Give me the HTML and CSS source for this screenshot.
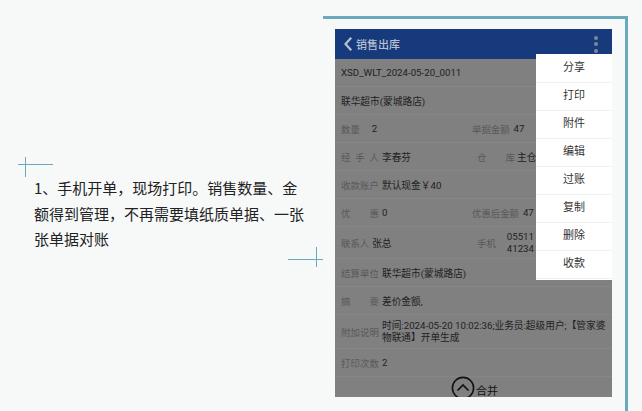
FILE: index.html
```html
<!DOCTYPE html>
<html lang="zh-CN">
<head>
<meta charset="utf-8">
<title>销售出库</title>
<link rel="stylesheet" href="styles.css">
</head>
<body>
<div class="page">
  <section class="intro">
    <span class="cross cross-a"></span>
    <span class="cross cross-b"></span>
    <p class="intro-text">1、手机开单，现场打印。销售数量、金额得到管理，不再需要填纸质单据、一张张单据对账</p>
  </section>
  <section class="frame">
    <div class="phone">
      <header class="bar">
        <svg class="back" width="10" height="14" viewBox="0 0 10 14"><path d="M7.5 1.5 L2.5 7 L7.5 12.5" fill="none" stroke="#b7bfd0" stroke-width="2.2" stroke-linecap="square"/></svg>
        <span class="bar-title">销售出库</span>
        <span class="dots"><i></i><i></i><i></i></span>
      </header>
      <div class="row"><span class="val">XSD_WLT_2024-05-20_0011</span></div>
      <div class="row"><span class="val">联华超市(蒙城路店)</span></div>
      <div class="row grid">
        <div class="cell"><span class="lab nat">数量</span><span class="val g12">2</span></div>
        <div class="cell"><span class="lab nat">单据金额</span><span class="val g4">47</span></div>
      </div>
      <div class="row grid">
        <div class="cell"><span class="lab j">经手人</span><span class="val">李春芬</span></div>
        <div class="cell p5"><span class="lab j38">仓库</span><span class="val g2">主仓</span></div>
      </div>
      <div class="row"><span class="lab j">收款账户</span><span class="val">默认现金￥40</span></div>
      <div class="row grid">
        <div class="cell"><span class="lab j">优惠</span><span class="val">0</span></div>
        <div class="cell"><span class="lab nat">优惠后金额</span><span class="val g4">47</span></div>
      </div>
      <div class="row grid tall">
        <div class="cell"><span class="lab nat">联系人</span><span class="val g3">张总</span></div>
        <div class="cell p5"><span class="lab nat">手机</span><span class="val g11 two">05511<br>41234</span></div>
      </div>
      <div class="row"><span class="lab j">结算单位</span><span class="val">联华超市(蒙城路店)</span></div>
      <div class="row"><span class="lab j">摘要</span><span class="val">差价金额,</span></div>
      <div class="row note"><span class="lab j">附加说明</span><span class="val two">时间:2024-05-20 10:02:36;业务员:超级用户;【管家婆<br>物联通】开单生成</span></div>
      <div class="row"><span class="lab j">打印次数</span><span class="val">2</span></div>
      <div class="merge">
        <svg class="merge-icon" width="24" height="24" viewBox="0 0 24 24"><circle cx="12" cy="12" r="10.6" fill="none" stroke="#111" stroke-width="1.6"/><path d="M6.5 14.5 L12 9 L17.5 14.5" fill="none" stroke="#111" stroke-width="1.7"/></svg>
        <span class="merge-text">合并</span>
      </div>
      <ul class="menu">
        <li>分享</li>
        <li>打印</li>
        <li>附件</li>
        <li>编辑</li>
        <li>过账</li>
        <li>复制</li>
        <li>删除</li>
        <li>收款</li>
      </ul>
    </div>
  </section>
</div>
</body>
</html>
```
FILE: styles.css
```css
html, body {
  margin: 0;
  padding: 0;
}
body {
  background: #f7f9f9;
  width: 642px;
  height: 411px;
  overflow: hidden;
  font-family: Roboto, "Noto Sans CJK SC", sans-serif;
}
.page {
  display: flex;
  width: 642px;
  height: 411px;
}
.intro {
  position: relative;
  width: 323px;
  flex: none;
  box-sizing: border-box;
  padding: 175px 0 0 34px;
}
.intro-text {
  margin: 0;
  width: 272px;
  font-family: "Noto Sans CJK SC", sans-serif;
  font-size: 15px;
  line-height: 25.5px;
  color: #222;
}
.cross {
  position: absolute;
  width: 35px;
  height: 20px;
}
.cross::before, .cross::after {
  content: "";
  position: absolute;
  background: #6aa9be;
}
.cross::before {
  left: 0;
  width: 35px;
  height: 1px;
}
.cross::after {
  top: 0;
  width: 1px;
  height: 20px;
}
.cross-a { left: 18px; top: 157px; }
.cross-a::before { top: 7px; }
.cross-a::after { left: 7px; }
.cross-b { left: 288px; top: 247px; }
.cross-b::before { top: 12px; }
.cross-b::after { left: 28px; }

.frame {
  margin-top: 16px;
  width: 305px;
  height: 395px;
  box-sizing: border-box;
  border-top: 3px solid #6aa9be;
  border-right: 3px solid #6aa9be;
  padding: 10px 0 0 12px;
  flex: none;
}
.phone {
  position: relative;
  width: 277px;
  height: 368px;
  overflow: hidden;
  background: #808080;
  font-size: 9.7px;
  color: #1f1f1f;
}
.bar {
  height: 30px;
  background: #173a7c;
  display: flex;
  align-items: center;
  padding-left: 8px;
}
.back { display: block; }
.bar-title {
  margin-left: 3px;
  font-family: "Noto Sans CJK SC", sans-serif;
  font-size: 11px;
  font-weight: 500;
  color: #b7bfd0;
}
.dots {
  margin-left: auto;
  margin-right: 14px;
  display: flex;
  flex-direction: column;
  gap: 2.5px;
}
.dots i {
  display: block;
  width: 4px;
  height: 4px;
  border-radius: 50%;
  background: #7d879c;
}
.row {
  height: 28px;
  box-sizing: border-box;
  border-bottom: 1px solid #878787;
  padding-left: 6px;
  display: flex;
  align-items: center;
}
.row.tall { height: 32px; }
.row.note { height: 34px; }
.grid {
  display: grid;
  grid-template-columns: 131px 1fr;
}
.cell {
  display: flex;
  align-items: center;
  white-space: nowrap;
}
.cell.p5 { padding-left: 5px; }
.lab {
  color: #585858;
  flex: none;
  white-space: nowrap;
  font-size: 9.4px;
}
.lab.j {
  width: 38px;
  margin-right: 3px;
  text-align: justify;
  text-align-last: justify;
}
.lab.j38 {
  width: 38px;
  text-align: justify;
  text-align-last: justify;
}
.val {
  color: #1f1f1f;
  white-space: nowrap;
}
.val.two { line-height: 11.5px; }
.g12 { margin-left: 12px; }
.g4 { margin-left: 4px; }
.g3 { margin-left: 3px; }
.g2 { margin-left: 2px; }
.g11 { margin-left: 11px; }
.merge {
  display: flex;
  align-items: center;
  padding-left: 116px;
  height: 24px;
  margin-top: -1px;
}
.merge-icon { display: block; }
.merge-text {
  margin-left: 1px;
  margin-top: 3px;
  font-size: 11px;
  color: #111;
}
.menu {
  position: absolute;
  left: 201px;
  top: 25px;
  width: 76px;
  margin: 0;
  padding: 0 0 2px;
  list-style: none;
  background: #fff;
}
.menu li {
  height: 28px;
  line-height: 28px;
  text-align: center;
  font-size: 11px;
  color: #333;
  box-shadow: 0 1px 0 #f1f1f1;
}
```
